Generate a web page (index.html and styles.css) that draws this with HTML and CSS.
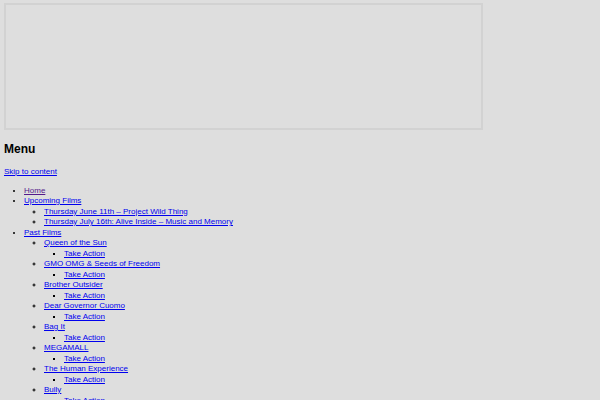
FILE: index.html
```html
<html lang="en">

<head>
    <meta charset="UTF-8">
    <meta name="viewport" content="width=device-width, initial-scale=1.0">
    <title>Menu</title>
    <link rel="stylesheet" href="styles.css">
</head>

<body>
    <div class="banner"></div>

    <h2 class="menu-title">Menu</h2>
    <a class="skip" href="#content">Skip to content</a>

    <ul class="menu">
        <li><a class="visited" href="#">Home</a></li>
        <li><a href="#">Upcoming Films</a>
            <ul>
                <li><a href="#">Thursday June 11th &ndash; Project Wild Thing</a></li>
                <li><a href="#">Thursday July 16th: Alive Inside &ndash; Music and Memory</a></li>
            </ul>
        </li>
        <li><a href="#">Past Films</a>
            <ul>
                <li><a href="#">Queen of the Sun</a>
                    <ul><li><a href="#">Take Action</a></li></ul>
                </li>
                <li><a href="#">GMO OMG &amp; Seeds of Freedom</a>
                    <ul><li><a href="#">Take Action</a></li></ul>
                </li>
                <li><a href="#">Brother Outsider</a>
                    <ul><li><a href="#">Take Action</a></li></ul>
                </li>
                <li><a href="#">Dear Governor Cuomo</a>
                    <ul><li><a href="#">Take Action</a></li></ul>
                </li>
                <li><a href="#">Bag It</a>
                    <ul><li><a href="#">Take Action</a></li></ul>
                </li>
                <li><a href="#">MEGAMALL</a>
                    <ul><li><a href="#">Take Action</a></li></ul>
                </li>
                <li><a href="#">The Human Experience</a>
                    <ul><li><a href="#">Take Action</a></li></ul>
                </li>
                <li><a href="#">Bully</a>
                    <ul><li><a href="#">Take Action</a></li></ul>
                </li>
            </ul>
        </li>
    </ul>
</body>

</html>
```

FILE: styles.css
```css
body {
    margin: 3px 4px;
    background: #dedede;
    color: #000;
    font-family: 'Liberation Sans', Arial, sans-serif;
    font-size: 8px;
    line-height: 10.5px;
}

a {
    color: #0000ee;
}

a.visited {
    color: #551a8b;
}

.banner {
    width: 475px;
    height: 123px;
    border: 2px solid #d2d2d2;
}

.menu-title {
    margin: 12px 0 11px 0;
    font-size: 12px;
    line-height: 14px;
}

.skip {
    display: block;
    width: max-content;
    margin-bottom: 8px;
}

.menu,
.menu ul {
    margin: 0;
    padding-left: 20px;
}

.menu {
    list-style-type: disc;
}

.menu ul {
    list-style-type: circle;
}

.menu ul ul {
    list-style-type: square;
}
```
